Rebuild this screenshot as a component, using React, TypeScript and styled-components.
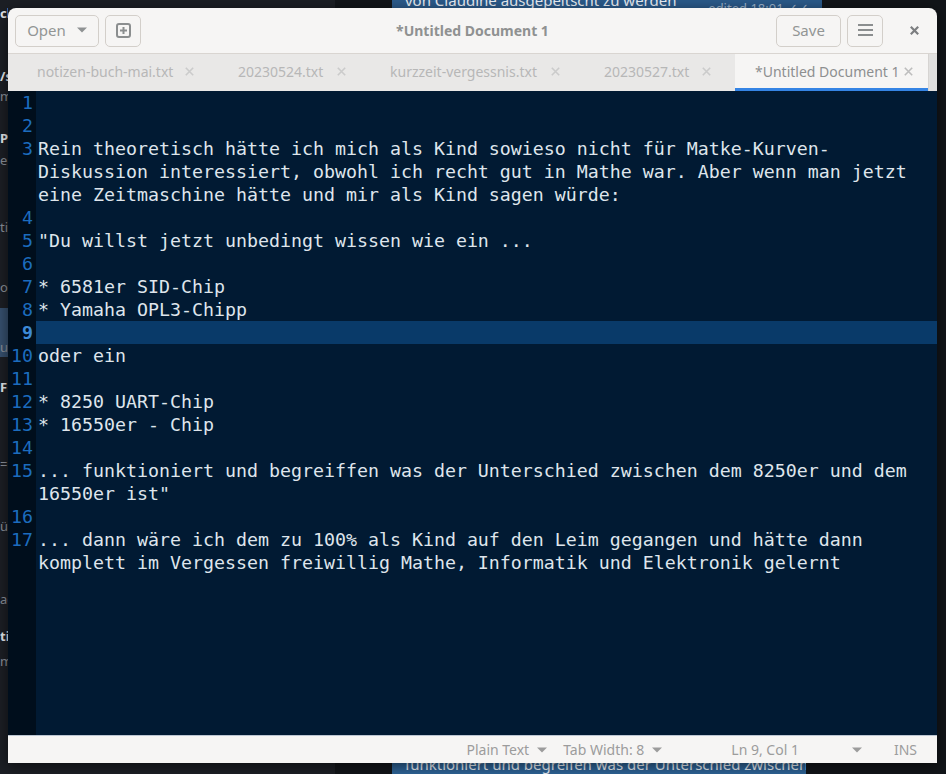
import React from "react";
import styled, { createGlobalStyle } from "styled-components";

const GlobalStyle = createGlobalStyle`
  html, body {
    margin: 0;
    padding: 0;
    background: #14171c;
    overflow: hidden;
  }
  body {
    font-family: "Noto Sans", "Open Sans", sans-serif;
  }
`;

const UI_FONT = `"Noto Sans", "Open Sans", sans-serif`;
const MONO_FONT = `"DejaVu Sans Mono", "Liberation Mono", monospace`;

// ---------- desktop behind the window ----------

const Desktop = styled.div`
  position: relative;
  width: 946px;
  height: 774px;
  overflow: hidden;
  display: grid;
  grid-template-columns: 335px 1fr;
  background: #121519;
`;

const ListPane = styled.div`
  background: #1c1f25;
`;

// only the first few pixels of the chat list peek out left of the window
const ListStrip = styled.div`
  width: 8px;
  overflow: hidden;
  display: flex;
  flex-direction: column;
  font-family: ${UI_FONT};
  font-size: 13px;
  line-height: 18px;
`;

const ListRow = styled.div<{ $gap: number; $bold?: boolean; $selected?: boolean }>`
  margin-top: ${({ $gap }) => $gap}px;
  height: ${({ $selected }) => ($selected ? 48 : 18)}px;
  display: flex;
  align-items: flex-end;
  white-space: nowrap;
  overflow: hidden;
  color: ${({ $bold }) => ($bold ? "#e8eaed" : "#8c9199")};
  font-weight: ${({ $bold }) => ($bold ? 700 : 400)};
  background: ${({ $selected }) => ($selected ? "#36506e" : "transparent")};
  padding-bottom: ${({ $selected }) => ($selected ? 1 : 0)}px;
`;

const ChatPane = styled.div`
  display: flex;
  flex-direction: column;
  justify-content: space-between;
  padding-left: 57px;
  font-family: ${UI_FONT};
`;

const Bubble = styled.div<{ $width: number; $top?: boolean }>`
  width: ${({ $width }) => $width}px;
  box-sizing: border-box;
  background: ${({ $top }) => ($top ? "#2b5a8a" : "#2e6396")};
  color: #e9eef4;
  font-size: 15px;
  line-height: 20px;
  white-space: nowrap;
  overflow: hidden;
  display: flex;
  justify-content: space-between;
  padding: ${({ $top }) => ($top ? "11px 13px 20px" : "4px 13px 30px")};
  margin-top: ${({ $top }) => ($top ? -21 : 0)}px;
  margin-bottom: ${({ $top }) => ($top ? 0 : -30)}px;
  border-radius: 6px;
`;

const BubbleMeta = styled.span`
  font-size: 13px;
  color: #9fb5cc;
  padding-top: 8px;
`;

// ---------- gedit window ----------

const Window = styled.div`
  position: absolute;
  left: 8px;
  top: 8px;
  width: 929px;
  height: 755px;
  display: flex;
  flex-direction: column;
  border-radius: 8px 8px 0 0;
  overflow: hidden;
  background: #f6f5f4;
  box-shadow: 0 3px 14px rgba(0, 0, 0, 0.55);
`;

const HeaderBar = styled.header`
  flex: none;
  height: 45px;
  display: grid;
  grid-template-columns: 1fr auto 1fr;
  align-items: center;
  padding: 0 7px;
  border-bottom: 1px solid #d9d5d1;
  font-family: ${UI_FONT};
`;

const HeaderGroup = styled.div<{ $end?: boolean }>`
  display: flex;
  align-items: center;
  gap: 6px;
  justify-content: ${({ $end }) => ($end ? "flex-end" : "flex-start")};
`;

const HeaderButton = styled.button<{ $width: number }>`
  width: ${({ $width }) => $width}px;
  height: 32px;
  box-sizing: border-box;
  display: flex;
  align-items: center;
  justify-content: center;
  gap: 11px;
  border: 1px solid #d3cfca;
  border-radius: 5px;
  background: #f6f5f4;
  color: #929595;
  font-family: ${UI_FONT};
  font-size: 15px;
  padding: 0 0 1px;
`;

const FlatButton = styled.button`
  width: 32px;
  height: 32px;
  margin-left: 9px;
  display: flex;
  align-items: center;
  justify-content: center;
  border: none;
  background: transparent;
  padding: 0;
`;

const Title = styled.div`
  font-size: 14px;
  font-weight: 700;
  color: #8f9191;
  padding-bottom: 1px;
`;

const TabBar = styled.div`
  flex: none;
  height: 37px;
  display: flex;
  padding-left: 9px;
  background: #e9e8e7;
  font-family: ${UI_FONT};
`;

const Tab = styled.div<{ $width: number; $active?: boolean }>`
  width: ${({ $width }) => $width}px;
  box-sizing: border-box;
  display: flex;
  align-items: center;
  padding-left: 20px;
  padding-right: ${({ $active }) => ($active ? 12 : 21)}px;
  background: ${({ $active }) => ($active ? "#f6f5f4" : "transparent")};
  border-bottom: 3px solid ${({ $active }) => ($active ? "#3584e4" : "transparent")};
  color: ${({ $active }) => ($active ? "#8d8f90" : "#b7b7b7")};
  font-size: 14px;
  white-space: nowrap;
`;

const TabLabel = styled.span`
  flex: 1;
  padding-top: 1px;
`;

const TabClose = styled.span`
  width: 16px;
  height: 16px;
  display: flex;
  align-items: center;
  justify-content: center;
`;

const TabScroll = styled.div`
  flex: none;
  width: 8px;
  border-left: 1px solid #d6d4d2;
  background: #e1e0df;
`;

const Editor = styled.div`
  flex: 1;
  min-height: 0;
  background: linear-gradient(to right, #000e1c 28px, #011a33 28px);
  font-family: ${MONO_FONT};
  font-size: 18.27px;
  line-height: 23px;
  color: #dfe5ec;
`;

const Line = styled.div`
  display: grid;
  grid-template-columns: 28px 1fr;
  align-items: start;
`;

const LineNumber = styled.span<{ $current?: boolean }>`
  text-align: right;
  padding-right: 3px;
  color: ${({ $current }) => ($current ? "#3d8ad6" : "#1c6cbe")};
  font-weight: ${({ $current }) => ($current ? 700 : 400)};
`;

const LineText = styled.span<{ $current?: boolean }>`
  min-height: 23px;
  padding-left: 2px;
  padding-right: 6px;
  white-space: pre-wrap;
  overflow-wrap: break-word;
  background: ${({ $current }) => ($current ? "#093a69" : "transparent")};
`;

const StatusBar = styled.footer`
  flex: none;
  height: 27px;
  display: flex;
  align-items: center;
  justify-content: flex-end;
  padding-right: 20px;
  border-top: 1px solid #bcc6d2;
  font-family: ${UI_FONT};
  font-size: 14px;
  color: #9c9c9c;
`;

const StatusItem = styled.span<{ $gap: number }>`
  margin-left: ${({ $gap }) => $gap}px;
  display: flex;
  align-items: center;
  gap: 8px;
  white-space: nowrap;
`;

// ---------- icons ----------

const Caret = ({ color = "#9c9c9c", width = 10 }: { color?: string; width?: number }) => (
  <svg width={width} height={6} viewBox="0 0 10 6">
    <path d="M0 0.5 L10 0.5 L5 5.5 Z" fill={color} />
  </svg>
);

const NewTabIcon = () => (
  <svg width="15" height="15" viewBox="0 0 15 15">
    <rect x="1" y="1" width="13" height="13" rx="2" fill="none" stroke="#8b8e8f" strokeWidth="2" />
    <path d="M7.5 4 V11 M4 7.5 H11" stroke="#8b8e8f" strokeWidth="2" />
  </svg>
);

const MenuIcon = () => (
  <svg width="15" height="12" viewBox="0 0 15 12">
    <path d="M0 1 H15 M0 6 H15 M0 11 H15" stroke="#8b8e8f" strokeWidth="2" />
  </svg>
);

const CloseIcon = ({ size, color, weight }: { size: number; color: string; weight: number }) => (
  <svg width={size} height={size} viewBox={`0 0 ${size} ${size}`}>
    <path d={`M0.8 0.8 L${size - 0.8} ${size - 0.8} M${size - 0.8} 0.8 L0.8 ${size - 0.8}`} stroke={color} strokeWidth={weight} />
  </svg>
);

// ---------- data ----------

const listRows = [
  { text: "ch", gap: 4, bold: true },
  { text: "/s", gap: 45, bold: true },
  { text: "m", gap: 2 },
  { text: "P", gap: 24, bold: true },
  { text: "e", gap: 4 },
  { text: "ti", gap: 49 },
  { text: "or", gap: 42 },
  { text: "uc", gap: 12, selected: true },
  { text: "F", gap: 21, bold: true },
  { text: "=", gap: 59 },
  { text: "ür", gap: 44 },
  { text: "ag", gap: 55 },
  { text: "ti", gap: 19, bold: true },
  { text: "m", gap: 7 },
];

const tabs = [
  { name: "notizen-buch-mai.txt", width: 201 },
  { name: "20230524.txt", width: 152 },
  { name: "kurzzeit-vergessnis.txt", width: 214 },
  { name: "20230527.txt", width: 151 },
  { name: "*Untitled Document 1", width: 193, active: true },
];

const lines = [
  "",
  "",
  "Rein theoretisch hätte ich mich als Kind sowieso nicht für Matke-Kurven-Diskussion interessiert, obwohl ich recht gut in Mathe war. Aber wenn man jetzt eine Zeitmaschine hätte und mir als Kind sagen würde:",
  "",
  '"Du willst jetzt unbedingt wissen wie ein ...',
  "",
  "* 6581er SID-Chip",
  "* Yamaha OPL3-Chipp",
  "",
  "oder ein",
  "",
  "* 8250 UART-Chip",
  "* 16550er - Chip",
  "",
  '... funktioniert und begreiffen was der Unterschied zwischen dem 8250er und dem 16550er ist"',
  "",
  "... dann wäre ich dem zu 100% als Kind auf den Leim gegangen und hätte dann komplett im Vergessen freiwillig Mathe, Informatik und Elektronik gelernt",
];

const CURRENT_LINE = 9;

export default function App() {
  return (
    <>
      <GlobalStyle />
      <Desktop>
        <ListPane>
          <ListStrip>
            {listRows.map((row, i) => (
              <ListRow key={i} $gap={row.gap} $bold={row.bold} $selected={row.selected}>
                {row.text}
              </ListRow>
            ))}
          </ListStrip>
        </ListPane>
        <ChatPane>
          <Bubble $width={430} $top>
            <span>von Claudine ausgepeitscht zu werden</span>
            <BubbleMeta>edited 18:01 ✓✓</BubbleMeta>
          </Bubble>
          <Bubble $width={414}>
            <span>funktioniert und begreifen was der Unterschied zwischen dem</span>
          </Bubble>
        </ChatPane>

        <Window>
          <HeaderBar>
            <HeaderGroup>
              <HeaderButton $width={84}>
                Open
                <Caret color="#8f9293" />
              </HeaderButton>
              <HeaderButton $width={36}>
                <NewTabIcon />
              </HeaderButton>
            </HeaderGroup>
            <Title>*Untitled Document 1</Title>
            <HeaderGroup $end>
              <HeaderButton $width={65}>Save</HeaderButton>
              <HeaderButton $width={36}>
                <MenuIcon />
              </HeaderButton>
              <FlatButton>
                <CloseIcon size={9} color="#7c7e80" weight={2.2} />
              </FlatButton>
            </HeaderGroup>
          </HeaderBar>

          <TabBar>
            {tabs.map((tab) => (
              <Tab key={tab.name} $width={tab.width} $active={tab.active}>
                <TabLabel>{tab.name}</TabLabel>
                <TabClose>
                  <CloseIcon size={9} color={tab.active ? "#bdbdbd" : "#cbcbcb"} weight={1.6} />
                </TabClose>
              </Tab>
            ))}
            <TabScroll />
          </TabBar>

          <Editor>
            {lines.map((text, i) => {
              const current = i + 1 === CURRENT_LINE;
              return (
                <Line key={i}>
                  <LineNumber $current={current}>{i + 1}</LineNumber>
                  <LineText $current={current}>{text}</LineText>
                </Line>
              );
            })}
          </Editor>

          <StatusBar>
            <StatusItem $gap={0}>
              Plain Text <Caret />
            </StatusItem>
            <StatusItem $gap={16}>
              Tab Width: 8 <Caret />
            </StatusItem>
            <StatusItem $gap={69}>Ln 9, Col 1</StatusItem>
            <StatusItem $gap={53}>
              <Caret />
            </StatusItem>
            <StatusItem $gap={32}>INS</StatusItem>
          </StatusBar>
        </Window>
      </Desktop>
    </>
  );
}
